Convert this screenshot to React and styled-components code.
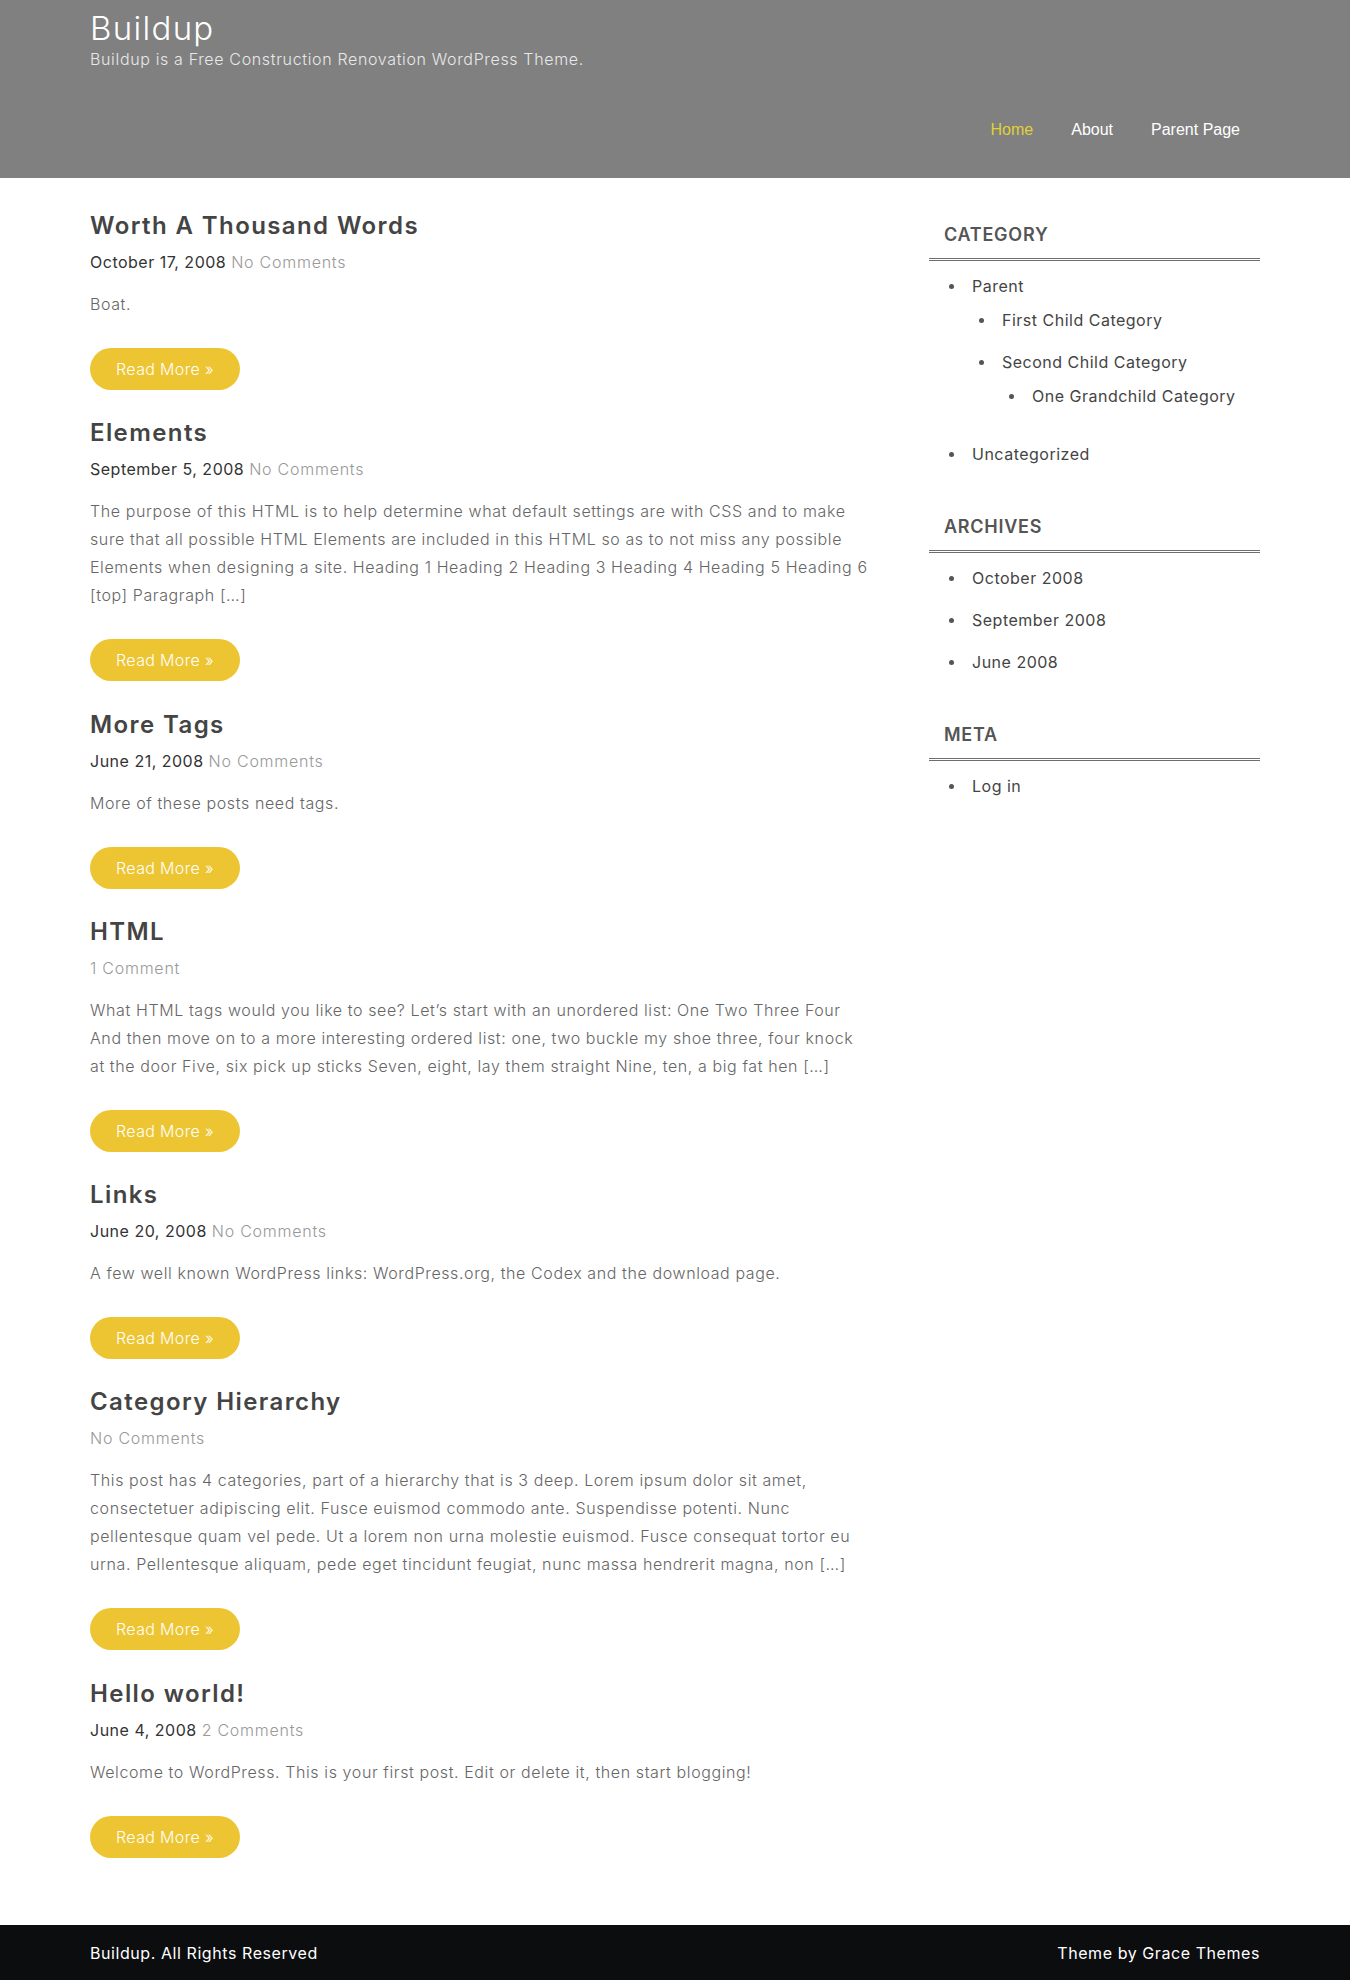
import React from "react";
import styled, { createGlobalStyle } from "styled-components";

const GlobalStyle = createGlobalStyle`
  * { box-sizing: border-box; }
  body {
    margin: 0;
    background: #fff;
    font-family: Inter, "Open Sans", sans-serif;
    color: #666;
  }
  a { text-decoration: none; color: inherit; }
`;

const posts = [
  {
    title: "Worth A Thousand Words",
    date: "October 17, 2008",
    comments: "No Comments",
    text: "Boat.",
  },
  {
    title: "Elements",
    date: "September 5, 2008",
    comments: "No Comments",
    text: "The purpose of this HTML is to help determine what default settings are with CSS and to make sure that all possible HTML Elements are included in this HTML so as to not miss any possible Elements when designing a site. Heading 1 Heading 2 Heading 3 Heading 4 Heading 5 Heading 6 [top] Paragraph […]",
  },
  {
    title: "More Tags",
    date: "June 21, 2008",
    comments: "No Comments",
    text: "More of these posts need tags.",
  },
  {
    title: "HTML",
    comments: "1 Comment",
    text: "What HTML tags would you like to see? Let’s start with an unordered list: One Two Three Four And then move on to a more interesting ordered list: one, two buckle my shoe three, four knock at the door Five, six pick up sticks Seven, eight, lay them straight Nine, ten, a big fat hen […]",
  },
  {
    title: "Links",
    date: "June 20, 2008",
    comments: "No Comments",
    text: "A few well known WordPress links: WordPress.org, the Codex and the download page.",
  },
  {
    title: "Category Hierarchy",
    comments: "No Comments",
    text: "This post has 4 categories, part of a hierarchy that is 3 deep. Lorem ipsum dolor sit amet, consectetuer adipiscing elit. Fusce euismod commodo ante. Suspendisse potenti. Nunc pellentesque quam vel pede. Ut a lorem non urna molestie euismod. Fusce consequat tortor eu urna. Pellentesque aliquam, pede eget tincidunt feugiat, nunc massa hendrerit magna, non […]",
  },
  {
    title: "Hello world!",
    date: "June 4, 2008",
    comments: "2 Comments",
    text: "Welcome to WordPress. This is your first post. Edit or delete it, then start blogging!",
  },
];

const navItems = ["Home", "About", "Parent Page"];

export default function App() {
  return (
    <>
      <GlobalStyle />
      <Header>
        <Container>
          <SiteTitle>Buildup</SiteTitle>
          <Tagline>Buildup is a Free Construction Renovation WordPress Theme.</Tagline>
          <Nav>
            {navItems.map((item, i) => (
              <NavLink key={item} $active={i === 0} href="#">
                {item}
              </NavLink>
            ))}
          </Nav>
        </Container>
      </Header>

      <Content>
        <Main>
          {posts.map((post) => (
            <Post key={post.title}>
              <PostTitle>{post.title}</PostTitle>
              <Meta>
                {post.date && <DateText>{post.date} </DateText>}
                <Comments href="#">{post.comments}</Comments>
              </Meta>
              <Excerpt>{post.text}</Excerpt>
              <ReadMore href="#">Read More »</ReadMore>
            </Post>
          ))}
        </Main>

        <Sidebar>
          <Widget>
            <WidgetTitle>Category</WidgetTitle>
            <List>
              <Item>
                Parent
                <SubList>
                  <Item>First Child Category</Item>
                  <Item>
                    Second Child Category
                    <SubList>
                      <Item>One Grandchild Category</Item>
                    </SubList>
                  </Item>
                </SubList>
              </Item>
              <Item>Uncategorized</Item>
            </List>
          </Widget>
          <Widget>
            <WidgetTitle>Archives</WidgetTitle>
            <List>
              <Item>October 2008</Item>
              <Item>September 2008</Item>
              <Item>June 2008</Item>
            </List>
          </Widget>
          <Widget>
            <WidgetTitle>Meta</WidgetTitle>
            <List>
              <Item>Log in</Item>
            </List>
          </Widget>
        </Sidebar>
      </Content>

      <Footer>
        <FooterInner>
          <span>Buildup. All Rights Reserved</span>
          <span>Theme by Grace Themes</span>
        </FooterInner>
      </Footer>
    </>
  );
}

const Container = styled.div`
  width: 1170px;
  margin: 0 auto;
`;

const Header = styled.header`
  background: #808080;
  padding: 9px 0 36px;
`;

const SiteTitle = styled.h1`
  margin: 0;
  font-size: 33px;
  line-height: 38px;
  font-weight: 300;
  letter-spacing: 1.3px;
  color: #fff;
`;

const Tagline = styled.p`
  margin: 0;
  font-size: 16px;
  line-height: 24px;
  font-weight: 300;
  letter-spacing: 0.65px;
  color: #e8e8e8;
`;

const Nav = styled.nav`
  display: flex;
  justify-content: flex-end;
  margin-top: 47px;
`;

const NavLink = styled.a`
  padding: 0 19px;
  font-family: "Liberation Sans", Arial, sans-serif;
  font-size: 16px;
  line-height: 24px;
  color: ${(p) => (p.$active ? "#e0d136" : "#fff")};
  &:last-child {
    padding-right: 20px;
  }
`;

const Content = styled(Container)`
  display: flex;
  justify-content: space-between;
  padding: 32px 0 40px;
`;

const Main = styled.main`
  width: 780px;
`;

const Post = styled.article`
  margin-bottom: 27.3px;
`;

const PostTitle = styled.h2`
  margin: 0 0 6px;
  font-size: 24px;
  line-height: 32px;
  font-weight: 600;
  letter-spacing: 1.4px;
  color: #444;
`;

const Meta = styled.div`
  margin-bottom: 14px;
  font-size: 16px;
  line-height: 28px;
  letter-spacing: 0.5px;
`;

const DateText = styled.span`
  color: #333;
`;

const Comments = styled.a`
  color: #999;
  font-weight: 300;
  letter-spacing: 0.75px;
`;

const Excerpt = styled.p`
  margin: 0 0 30px;
  font-size: 16px;
  line-height: 28px;
  font-weight: 300;
  letter-spacing: 0.6px;
  color: #666;
`;

const ReadMore = styled.a`
  display: flex;
  align-items: center;
  justify-content: center;
  width: 150px;
  height: 42px;
  border-radius: 21px;
  background: #edc532;
  color: #fff;
  font-size: 16px;
  font-weight: 300;
  letter-spacing: 0.35px;
`;

const Sidebar = styled.aside`
  width: 331px;
  padding-top: 13px;
`;

const Widget = styled.section`
  margin-bottom: 40px;
`;

const WidgetTitle = styled.h3`
  margin: 0;
  padding: 0 15px 11px;
  font-size: 18px;
  line-height: 24px;
  font-weight: 600;
  letter-spacing: 0.75px;
  text-transform: uppercase;
  color: #555;
  border-bottom: 3px double #6f6f6f;
`;

const List = styled.ul`
  list-style: none;
  margin: 4px 0 0;
  padding: 0 0 0 43px;
`;

const SubList = styled.ul`
  list-style: none;
  margin: 0;
  padding: 0 0 0 30px;
`;

const Item = styled.li`
  position: relative;
  padding: 8px 0;
  font-size: 16px;
  line-height: 26px;
  letter-spacing: 0.5px;
  color: #444;
  &::before {
    content: "";
    position: absolute;
    left: -23px;
    top: 19px;
    width: 5px;
    height: 5px;
    border-radius: 50%;
    background: #555;
  }
`;

const Footer = styled.footer`
  background: #0b0d0f;
  padding: 16px 0 17px;
`;

const FooterInner = styled(Container)`
  display: flex;
  justify-content: space-between;
  font-size: 16px;
  line-height: 24px;
  letter-spacing: 0.57px;
  color: #fff;
`;
